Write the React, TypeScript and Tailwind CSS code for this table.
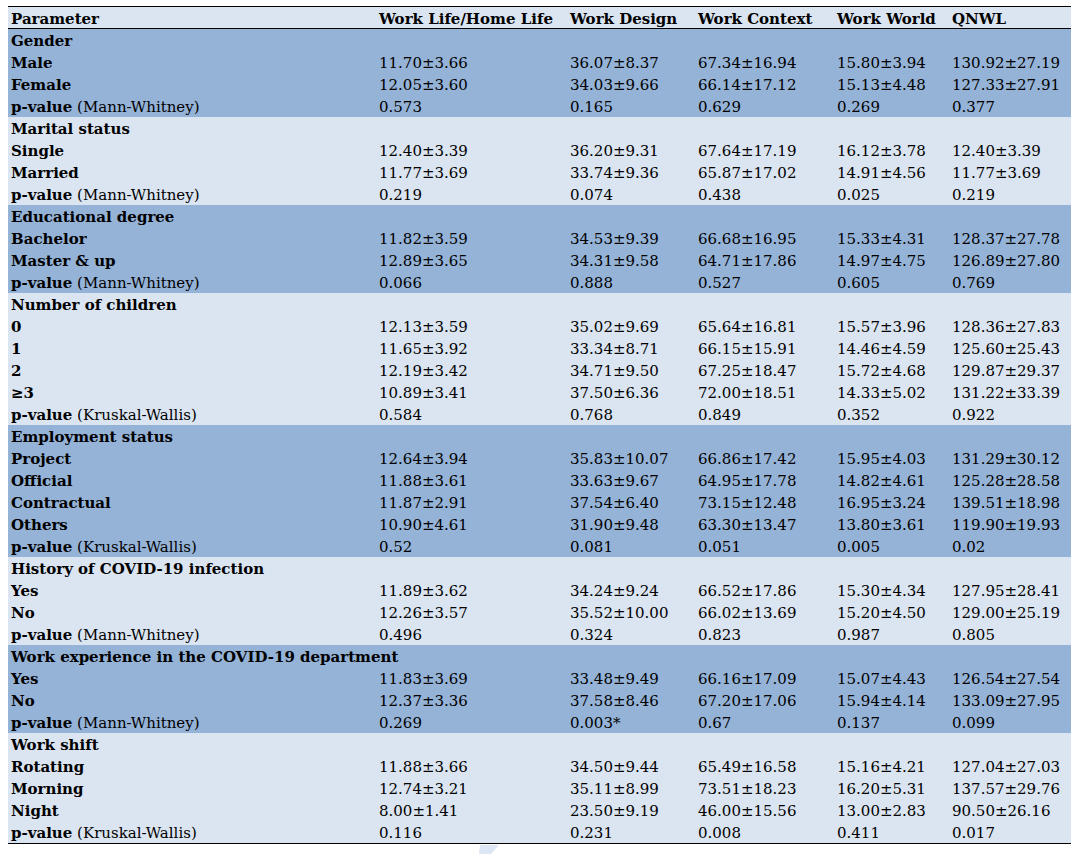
import React from "react";

type Row = { label: string; test?: string; values?: string[] };
type Group = { title: string; dark: boolean; rows: Row[] };

const MW = "(Mann-Whitney)";
const KW = "(Kruskal-Wallis)";

const groups: Group[] = [
  {
    title: "Gender",
    dark: true,
    rows: [
      { label: "Male", values: ["11.70±3.66", "36.07±8.37", "67.34±16.94", "15.80±3.94", "130.92±27.19"] },
      { label: "Female", values: ["12.05±3.60", "34.03±9.66", "66.14±17.12", "15.13±4.48", "127.33±27.91"] },
      { label: "p-value", test: MW, values: ["0.573", "0.165", "0.629", "0.269", "0.377"] },
    ],
  },
  {
    title: "Marital status",
    dark: false,
    rows: [
      { label: "Single", values: ["12.40±3.39", "36.20±9.31", "67.64±17.19", "16.12±3.78", "12.40±3.39"] },
      { label: "Married", values: ["11.77±3.69", "33.74±9.36", "65.87±17.02", "14.91±4.56", "11.77±3.69"] },
      { label: "p-value", test: MW, values: ["0.219", "0.074", "0.438", "0.025", "0.219"] },
    ],
  },
  {
    title: "Educational degree",
    dark: true,
    rows: [
      { label: "Bachelor", values: ["11.82±3.59", "34.53±9.39", "66.68±16.95", "15.33±4.31", "128.37±27.78"] },
      { label: "Master & up", values: ["12.89±3.65", "34.31±9.58", "64.71±17.86", "14.97±4.75", "126.89±27.80"] },
      { label: "p-value", test: MW, values: ["0.066", "0.888", "0.527", "0.605", "0.769"] },
    ],
  },
  {
    title: "Number of children",
    dark: false,
    rows: [
      { label: "0", values: ["12.13±3.59", "35.02±9.69", "65.64±16.81", "15.57±3.96", "128.36±27.83"] },
      { label: "1", values: ["11.65±3.92", "33.34±8.71", "66.15±15.91", "14.46±4.59", "125.60±25.43"] },
      { label: "2", values: ["12.19±3.42", "34.71±9.50", "67.25±18.47", "15.72±4.68", "129.87±29.37"] },
      { label: "≥3", values: ["10.89±3.41", "37.50±6.36", "72.00±18.51", "14.33±5.02", "131.22±33.39"] },
      { label: "p-value", test: KW, values: ["0.584", "0.768", "0.849", "0.352", "0.922"] },
    ],
  },
  {
    title: "Employment status",
    dark: true,
    rows: [
      { label: "Project", values: ["12.64±3.94", "35.83±10.07", "66.86±17.42", "15.95±4.03", "131.29±30.12"] },
      { label: "Official", values: ["11.88±3.61", "33.63±9.67", "64.95±17.78", "14.82±4.61", "125.28±28.58"] },
      { label: "Contractual", values: ["11.87±2.91", "37.54±6.40", "73.15±12.48", "16.95±3.24", "139.51±18.98"] },
      { label: "Others", values: ["10.90±4.61", "31.90±9.48", "63.30±13.47", "13.80±3.61", "119.90±19.93"] },
      { label: "p-value", test: KW, values: ["0.52", "0.081", "0.051", "0.005", "0.02"] },
    ],
  },
  {
    title: "History of COVID-19 infection",
    dark: false,
    rows: [
      { label: "Yes", values: ["11.89±3.62", "34.24±9.24", "66.52±17.86", "15.30±4.34", "127.95±28.41"] },
      { label: "No", values: ["12.26±3.57", "35.52±10.00", "66.02±13.69", "15.20±4.50", "129.00±25.19"] },
      { label: "p-value", test: MW, values: ["0.496", "0.324", "0.823", "0.987", "0.805"] },
    ],
  },
  {
    title: "Work experience in the COVID-19 department",
    dark: true,
    rows: [
      { label: "Yes", values: ["11.83±3.69", "33.48±9.49", "66.16±17.09", "15.07±4.43", "126.54±27.54"] },
      { label: "No", values: ["12.37±3.36", "37.58±8.46", "67.20±17.06", "15.94±4.14", "133.09±27.95"] },
      { label: "p-value", test: MW, values: ["0.269", "0.003*", "0.67", "0.137", "0.099"] },
    ],
  },
  {
    title: "Work shift",
    dark: false,
    rows: [
      { label: "Rotating", values: ["11.88±3.66", "34.50±9.44", "65.49±16.58", "15.16±4.21", "127.04±27.03"] },
      { label: "Morning", values: ["12.74±3.21", "35.11±8.99", "73.51±18.23", "16.20±5.31", "137.57±29.76"] },
      { label: "Night", values: ["8.00±1.41", "23.50±9.19", "46.00±15.56", "13.00±2.83", "90.50±26.16"] },
      { label: "p-value", test: KW, values: ["0.116", "0.231", "0.008", "0.411", "0.017"] },
    ],
  },
];

const headers = ["Parameter", "Work Life/Home Life", "Work Design", "Work Context", "Work World", "QNWL"];

const cols = "grid grid-cols-[368px_191px_128px_139px_115px_122px] h-[22px] pt-[2px] leading-[20px]";

export default function App() {
  return (
    <div className="relative w-[1079px] h-[854px] bg-white pt-[6px] pl-[8px] text-black text-[15px] font-['DejaVu_Serif',serif]">
      <div className="w-[1063px] border-t border-b border-black">
        {/* header */}
        <div className={`${cols} bg-[#dbe5f1] border-b border-black font-bold`}>
          {headers.map((h) => (
            <div key={h} className="pl-[3px] whitespace-nowrap">
              {h}
            </div>
          ))}
        </div>

        {groups.map((g) => (
          <div key={g.title} className={g.dark ? "bg-[#95b3d7]" : "bg-[#dbe5f1]"}>
            <div className={cols}>
              <div className="pl-[3px] font-bold whitespace-nowrap col-span-6">{g.title}</div>
            </div>
            {g.rows.map((r, i) => (
              <div key={i} className={cols}>
                <div className="pl-[3px] whitespace-nowrap">
                  <span className="font-bold">{r.label}</span>
                  {r.test && <span> {r.test}</span>}
                </div>
                {r.values?.map((v, j) => (
                  <div key={j} className="pl-[3px] whitespace-nowrap">
                    {v}
                  </div>
                ))}
              </div>
            ))}
          </div>
        ))}
      </div>

      {/* watermark fragment below the table */}
      <svg className="absolute left-[478px] top-[845px]" width="24" height="9" viewBox="0 0 24 9">
        <polygon points="2,0 21,0 13,9 1,9" fill="#dce6f4" />
      </svg>
    </div>
  );
}
